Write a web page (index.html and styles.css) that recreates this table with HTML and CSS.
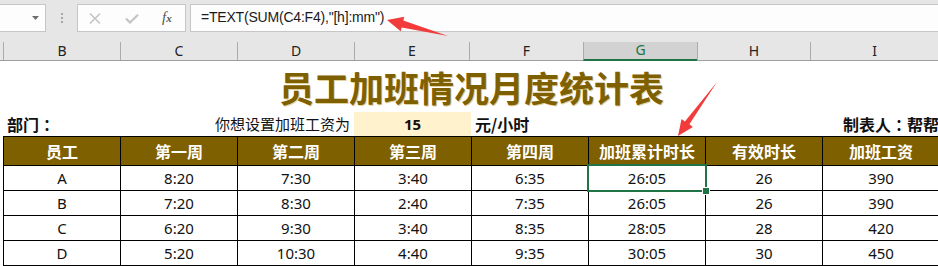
FILE: index.html
```
<!DOCTYPE html>
<html lang="zh">
<head>
<meta charset="utf-8">
<title>员工加班情况月度统计表</title>
<link rel="stylesheet" href="styles.css">
</head>
<body>
<div class="app">
  <div class="toolbar">
    <div class="namebox">
      <svg class="dd" width="7" height="4" viewBox="0 0 7 4"><polygon points="0,0 7,0 3.5,4" fill="#6f6f6f"/></svg>
    </div>
    <div class="grip"><span></span><span></span><span></span></div>
    <div class="btnbox">
      <svg class="ic" width="12" height="11" viewBox="0 0 12 11"><path d="M1 0.5 L11 10.5 M11 0.5 L1 10.5" stroke="#c4c4c4" stroke-width="1.5" fill="none"/></svg>
      <svg class="ic" width="14" height="10" viewBox="0 0 14 10"><path d="M1 4.5 L5 8.5 L13 0.8" stroke="#c4c4c4" stroke-width="2.2" fill="none"/></svg>
      <span class="fx">f<span class="fx-x">x</span></span>
    </div>
    <div class="formula">=TEXT(SUM(C4:F4),"[h]:mm")</div>
  </div>

  <div class="colhead">
    <div class="ch w117">B</div>
    <div class="ch w117">C</div>
    <div class="ch w117">D</div>
    <div class="ch w115">E</div>
    <div class="ch w114">F</div>
    <div class="ch w114 sel">G</div>
    <div class="ch w113">H</div>
    <div class="ch wrest">I</div>
  </div>

  <div class="sheet">
    <div class="title-row"><h1 class="title">员工加班情况月度统计表</h1></div>
    <div class="info-row">
      <div class="info dept">部门<span class="colon">：</span></div>
      <div class="info prompt">你想设置加班工资为</div>
      <div class="info rate">15</div>
      <div class="info unit">元/小时</div>
      <div class="info maker">制表人<span class="colon">：</span>帮帮</div>
    </div>
    <div class="table">
      <div class="th">员工</div>
      <div class="th">第一周</div>
      <div class="th">第二周</div>
      <div class="th">第三周</div>
      <div class="th">第四周</div>
      <div class="th">加班累计时长</div>
      <div class="th">有效时长</div>
      <div class="th">加班工资</div>

      <div class="td">A</div><div class="td">8:20</div><div class="td">7:30</div><div class="td">3:40</div><div class="td">6:35</div><div class="td active">26:05</div><div class="td">26</div><div class="td">390</div>
      <div class="td">B</div><div class="td">7:20</div><div class="td">8:30</div><div class="td">2:40</div><div class="td">7:35</div><div class="td">26:05</div><div class="td">26</div><div class="td">390</div>
      <div class="td">C</div><div class="td">6:20</div><div class="td">9:30</div><div class="td">3:40</div><div class="td">8:35</div><div class="td">28:05</div><div class="td">28</div><div class="td">420</div>
      <div class="td">D</div><div class="td">5:20</div><div class="td">10:30</div><div class="td">4:40</div><div class="td">9:35</div><div class="td">30:05</div><div class="td">30</div><div class="td">450</div>
    </div>
  </div>

  <svg class="arrows" width="938" height="266" viewBox="0 0 938 266">
    <polygon points="387,20 404.3,16.8 403.3,20.6 448,36 401.7,27.4 400.7,31.2" fill="#f23c3c"/>
    <polygon points="678,136 692.9,126.9 689.4,124.3 717,82 684.9,121.5 681.5,118.9" fill="#f23c3c"/>
  </svg>
</div>
</body>
</html>
```
FILE: styles.css
```
html, body {
  margin: 0;
  padding: 0;
  background: #ffffff;
}
body {
  width: 938px;
  height: 266px;
  overflow: hidden;
  font-family: "Noto Sans", "Noto Sans CJK SC", sans-serif;
}
.app {
  position: relative;
  width: 938px;
  height: 266px;
  overflow: hidden;
}

/* formula bar */
.toolbar {
  display: flex;
  align-items: flex-start;
  height: 32px;
  padding-top: 4px;
  box-sizing: border-box;
  background: #e6e6e6;
}
.namebox {
  width: 47px;
  height: 28px;
  margin-left: -1px;
  box-sizing: border-box;
  border: 1px solid #c6c6c6;
  background: #fdfdfd;
  display: flex;
  align-items: center;
  justify-content: flex-end;
  padding-right: 6px;
}
.dd { display: block; margin-top: -1px; }
.grip {
  width: 31px;
  height: 28px;
  display: flex;
  flex-direction: column;
  align-items: center;
  justify-content: center;
  gap: 2px;
}
.grip span {
  display: block;
  width: 2px;
  height: 2px;
  background: #a6a6a6;
}
.btnbox {
  width: 109px;
  height: 28px;
  box-sizing: border-box;
  border: 1px solid #c6c6c6;
  background: #fdfdfd;
  display: flex;
  align-items: center;
  padding-left: 11px;
}
.ic { display: block; }
.ic + .ic { margin-left: 24px; margin-top: 2px; }
.fx {
  margin-left: 23px;
  font-family: "Liberation Serif", serif;
  font-style: italic;
  font-size: 15px;
  color: #555;
  line-height: 1;
  margin-top: -1px;
}
.fx-x { font-size: 11px; font-weight: bold; }
.formula {
  flex: 1;
  height: 28px;
  margin-left: 4px;
  margin-right: -2px;
  box-sizing: border-box;
  border: 1px solid #c6c6c6;
  background: #fdfdfd;
  padding-left: 10px;
  font-family: "Liberation Sans", Arial, sans-serif;
  font-size: 14px;
  letter-spacing: -0.2px;
  line-height: 25px;
  color: #1a1a1a;
  white-space: nowrap;
}

/* column headers */
.colhead {
  display: flex;
  align-items: flex-end;
  height: 29px;
  padding-left: 3px;
  box-sizing: border-box;
  background: #e6e6e6;
  border-bottom: 1px solid #9f9f9f;
}
.ch {
  height: 18px;
  box-sizing: border-box;
  border-left: 1px solid #ababab;
  text-align: center;
  font-family: "Noto Sans", sans-serif;
  font-size: 14px;
  line-height: 18px;
  color: #222;
  flex: none;
}
.w117 { width: 117px; }
.w115 { width: 115px; }
.w114 { width: 114px; }
.w113 { width: 113px; }
.wrest { flex: 1; }
.ch.sel {
  background: #d2d2d2;
  color: #217346;
  border-bottom: 2px solid #217346;
  line-height: 16px;
  margin-bottom: -1px;
  height: 19px;
}

/* sheet */
.sheet {
  padding-left: 3px;
}
.title-row {
  height: 51px;
  width: 937px;
  display: flex;
  align-items: center;
  justify-content: center;
}
.title {
  margin: 0;
  font-family: "Noto Sans CJK SC", sans-serif;
  font-size: 35px;
  font-weight: 700;
  line-height: 1;
  color: #7f6000;
  text-shadow: 1px 1px 0 rgba(191, 150, 30, 0.45);
  white-space: nowrap;
}
.info-row {
  display: grid;
  grid-template-columns: repeat(8, 117px);
  height: 24px;
}
.info {
  font-family: "Noto Sans CJK SC", sans-serif;
  line-height: 24px;
  white-space: nowrap;
  color: #111;
}
.colon {
  padding-left: 4px;
  letter-spacing: -4px;
}
.dept {
  grid-column: 1;
  font-size: 16px;
  font-weight: 700;
  padding-left: 4px;
}
.prompt {
  grid-column: 2 / span 2;
  text-align: right;
  font-size: 15px;
  padding-right: 4px;
}
.rate {
  grid-column: 4;
  background: #fff2cc;
  text-align: center;
  font-family: "Noto Sans", sans-serif;
  font-size: 15px;
  font-weight: 700;
}
.unit {
  grid-column: 5;
  font-size: 16px;
  font-weight: 700;
  padding-left: 4px;
}
.maker {
  grid-column: 8;
  font-size: 16px;
  font-weight: 700;
  text-align: right;
  padding-right: 0;
}

.table {
  display: grid;
  grid-template-columns: repeat(8, 116px);
  grid-template-rows: 28px repeat(4, 24px);
  gap: 1px;
  width: max-content;
  background: #000;
  border: 1px solid #000;
}
.th {
  background: #7f6000;
  color: #fff;
  font-family: "Noto Sans CJK SC", sans-serif;
  font-size: 16px;
  font-weight: 700;
  display: flex;
  align-items: center;
  justify-content: center;
}
.td {
  background: #fff;
  color: #111;
  font-family: "Noto Sans", "Noto Sans CJK SC", sans-serif;
  font-size: 15px;
  display: flex;
  align-items: center;
  justify-content: center;
}
.td.active {
  position: relative;
  z-index: 1;
  outline: 2px solid #217346;
}
.td.active::after {
  content: "";
  position: absolute;
  right: -4px;
  bottom: -4px;
  width: 6px;
  height: 6px;
  background: #217346;
  box-shadow: 0 0 0 1px #fff;
}

.arrows {
  position: absolute;
  left: 0;
  top: 0;
  pointer-events: none;
}
```
